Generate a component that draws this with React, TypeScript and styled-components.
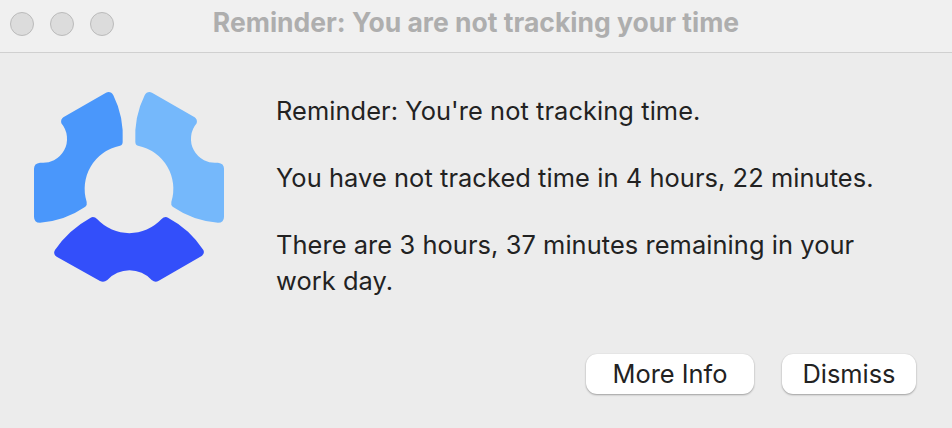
import React from "react";
import styled, { createGlobalStyle } from "styled-components";

const Global = createGlobalStyle`
  html, body { margin: 0; padding: 0; background: #ececec; }
  body { font-family: Inter, "Liberation Sans", sans-serif; -webkit-font-smoothing: antialiased; }
`;

const Window = styled.div`
  width: 952px;
  height: 428px;
  display: flex;
  flex-direction: column;
  background: #ececec;
  overflow: hidden;
`;

const TitleBar = styled.header`
  box-sizing: border-box;
  height: 53px;
  flex: none;
  display: grid;
  grid-template-columns: 1fr auto 1fr;
  align-items: center;
  padding: 0 10px 5px;
  background: #f0f0f0;
  border-bottom: 1px solid #d0d0d0;
`;

const Lights = styled.div`
  display: flex;
  gap: 16px;
`;

const Light = styled.span`
  width: 22px;
  height: 22px;
  border-radius: 50%;
  background: #dcdcdc;
  border: 1px solid #bbbbbb;
`;

const Title = styled.h1`
  margin: 0;
  padding-bottom: 3px;
  font-size: 26.5px;
  font-weight: 700;
  color: #aeaeae;
  white-space: nowrap;
`;

const Body = styled.main`
  flex: 1;
  display: grid;
  grid-template-columns: 220px 1fr;
  column-gap: 36px;
  padding: 27px 36px 0 20px;
`;

const Logo = styled.svg`
  width: 220px;
  height: 210px;
  display: block;
`;

const Message = styled.div`
  padding-top: 13px;
  color: #222222;
  font-size: 25.4px;
  letter-spacing: 0.08px;
  line-height: 36px;
`;

const Paragraph = styled.p`
  margin: 0 0 31px;
`;

const Actions = styled.footer`
  flex: none;
  display: flex;
  justify-content: flex-end;
  gap: 28px;
  padding: 0 36px 34px 0;
`;

const Button = styled.button<{ $w: number }>`
  width: ${(p) => p.$w}px;
  height: 40px;
  padding: 0 0 2px;
  border: none;
  border-radius: 11px;
  background: #ffffff;
  color: #222222;
  font: 400 25.4px Inter, "Liberation Sans", sans-serif;
  box-shadow: 0 1px 2px rgba(0, 0, 0, 0.32), 0 0 1px rgba(0, 0, 0, 0.12);
`;

const LEFT =
  "M258 38 L130 112 Q121 118 124 130 A72 72 0 0 1 60 248 Q42 250 42 266 L42 410 Q42 428 60 428 Q135 422 196 380 Q202 375 200 366 A132 132 0 0 1 300 197 Q308 195 308 186 Q312 110 280 46 Q272 32 258 38 Z";
const BOTTOM =
  "M212 413 Q222 408 232 418 A132 132 0 0 0 424 418 Q434 408 444 413 Q510 448 550 510 Q555 520 545 528 L415 603 Q405 608 395 600 A90 90 0 0 0 262 600 Q252 608 240 603 L110 530 Q98 522 105 510 Q145 450 212 413 Z";

export default function App() {
  return (
    <Window>
      <Global />
      <TitleBar>
        <Lights>
          <Light />
          <Light />
          <Light />
        </Lights>
        <Title>Reminder: You are not tracking your time</Title>
      </TitleBar>
      <Body>
        <Logo viewBox="0 0 660 630" aria-label="logo">
          <path d={LEFT} fill="#4a97fb" />
          <path d={LEFT} fill="#75b8fb" transform="matrix(-1 0 0 1 654 0)" />
          <path d={BOTTOM} fill="#334ffa" />
        </Logo>
        <Message>
          <Paragraph>Reminder: You're not tracking time.</Paragraph>
          <Paragraph>You have not tracked time in 4 hours, 22 minutes.</Paragraph>
          <Paragraph>There are 3 hours, 37 minutes remaining in your work day.</Paragraph>
        </Message>
      </Body>
      <Actions>
        <Button $w={168}>More Info</Button>
        <Button $w={134}>Dismiss</Button>
      </Actions>
    </Window>
  );
}
